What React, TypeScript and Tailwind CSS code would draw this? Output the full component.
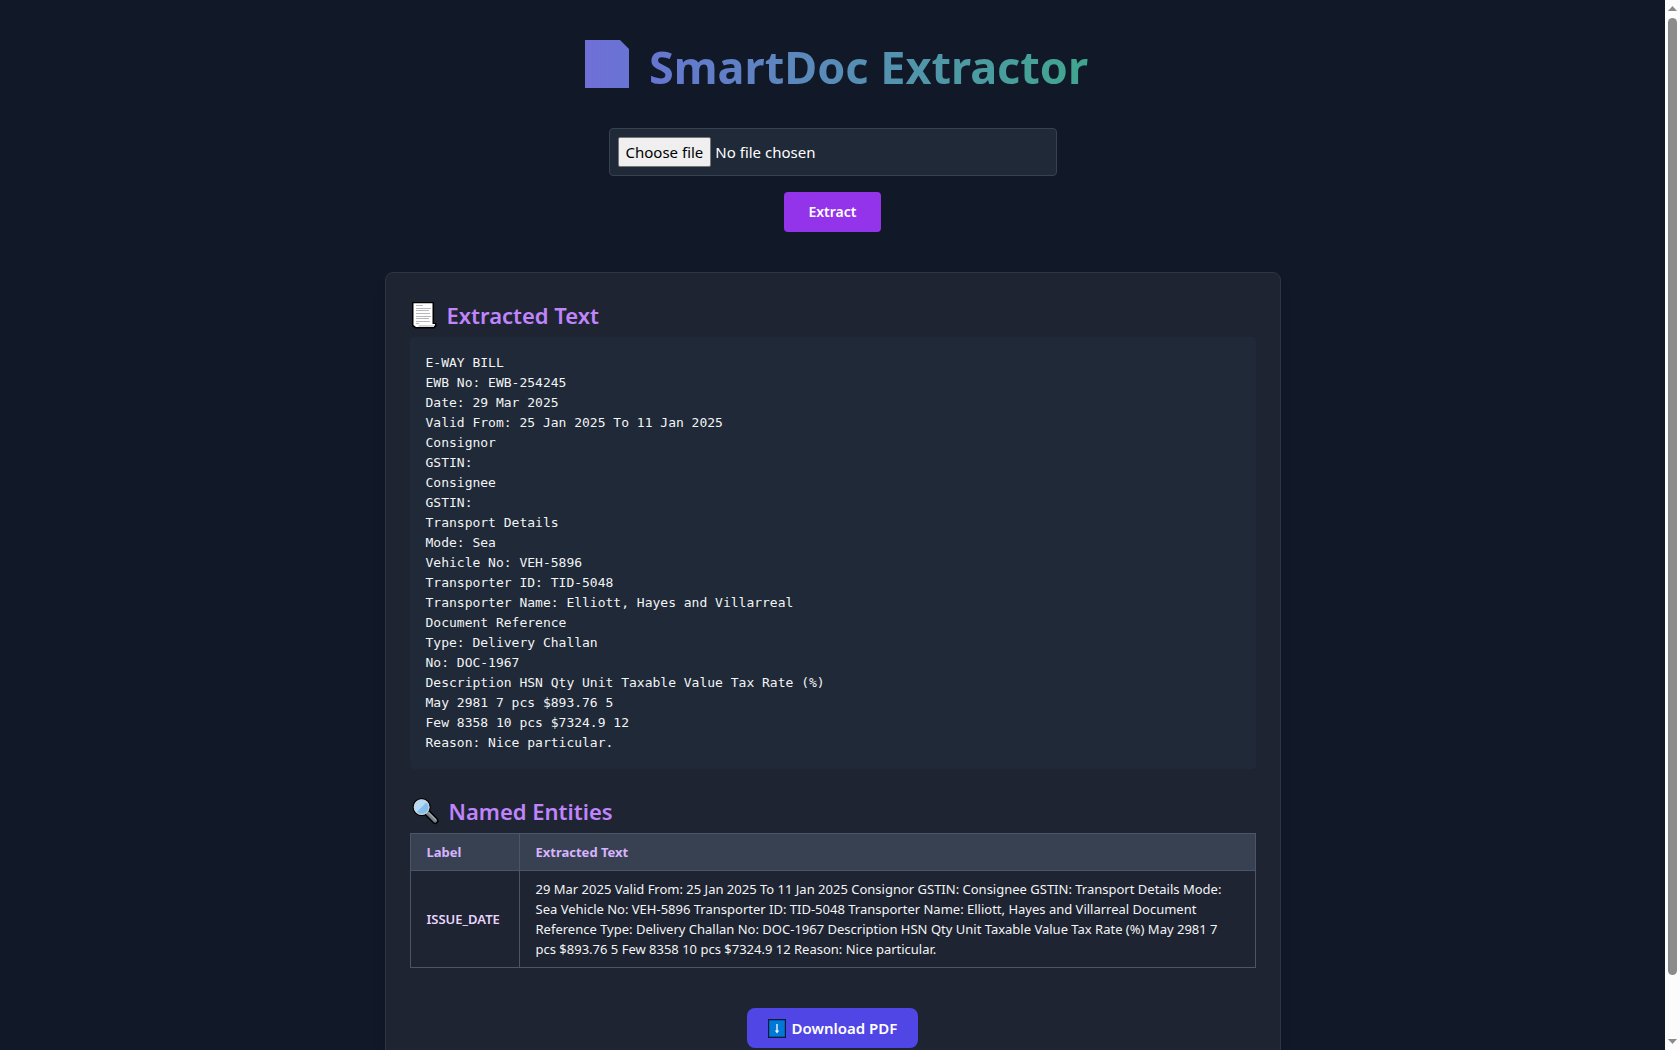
import React from "react";

const extractedText = `E-WAY BILL
EWB No: EWB-254245
Date: 29 Mar 2025
Valid From: 25 Jan 2025 To 11 Jan 2025
Consignor
GSTIN:
Consignee
GSTIN:
Transport Details
Mode: Sea
Vehicle No: VEH-5896
Transporter ID: TID-5048
Transporter Name: Elliott, Hayes and Villarreal
Document Reference
Type: Delivery Challan
No: DOC-1967
Description HSN Qty Unit Taxable Value Tax Rate (%)
May 2981 7 pcs $893.76 5
Few 8358 10 pcs $7324.9 12
Reason: Nice particular.`;

const entities = [
  {
    label: "ISSUE_DATE",
    text: "29 Mar 2025 Valid From: 25 Jan 2025 To 11 Jan 2025 Consignor GSTIN: Consignee GSTIN: Transport Details Mode: Sea Vehicle No: VEH-5896 Transporter ID: TID-5048 Transporter Name: Elliott, Hayes and Villarreal Document Reference Type: Delivery Challan No: DOC-1967 Description HSN Qty Unit Taxable Value Tax Rate (%) May 2981 7 pcs $893.76 5 Few 8358 10 pcs $7324.9 12 Reason: Nice particular.",
  },
];

function PageIcon() {
  return (
    <svg className="shrink-0" width="44" height="48" viewBox="0 0 44 48" aria-hidden="true">
      <defs>
        <linearGradient id="page" x1="0" x2="1" y1="0" y2="0">
          <stop offset="0" stopColor="#706fd8" />
          <stop offset="1" stopColor="#6874d3" />
        </linearGradient>
      </defs>
      <path d="M0 0H35L44 9V48H0Z" fill="url(#page)" />
    </svg>
  );
}

function ScrollIcon() {
  return (
    <svg width="25" height="27" viewBox="0 0 25 27" aria-hidden="true">
      <path d="M0 0H22V21H24.5V24L22.5 26.5H3.5L0 24Z" fill="#000" />
      <path d="M1.5 1.2H20.5V22H23.3L21.5 25H4L1.5 23Z" fill="#fff" />
      <path d="M7 23H23L21.5 25H6Z" fill="#d5d5d8" />
      <g stroke="#bab7bc" strokeWidth="1">
        <path d="M4 3.5H11M4 6.5H19M4 8.5H17M4 11.5H18M4 14.5H19M4 16.5H17M4 19.5H18M4 21.5H7" />
      </g>
    </svg>
  );
}

function MagnifierIcon() {
  return (
    <svg width="27" height="28" viewBox="0 0 28 28" aria-hidden="true">
      <path d="M15 15L24 24" stroke="#000" strokeWidth="7" strokeLinecap="round" />
      <circle cx="10" cy="10" r="9.4" fill="#000" />
      <path d="M16 16L24 24" stroke="#74848a" strokeWidth="4" strokeLinecap="round" />
      <path d="M17.5 16L24.5 23" stroke="#a3b0b5" strokeWidth="1.3" strokeLinecap="round" />
      <circle cx="10" cy="10" r="8" fill="#83beec" />
      <path d="M4.5 15.5A7.8 7.8 0 0 1 15.5 4.5Z" fill="#b5dbf5" />
      <circle cx="10" cy="10" r="7.6" fill="none" stroke="#c9d3d8" strokeWidth="1.3" />
    </svg>
  );
}

function DownIcon() {
  return (
    <svg width="18" height="19" viewBox="0 0 18 19" aria-hidden="true">
      <path d="M0 0H18V19H0Z" fill="#0c1a3c" />
      <path d="M1.2 1.3H16.8V17.7H1.2Z" fill="#0078d7" />
      <path d="M9 5V13" stroke="#fff" strokeWidth="1.3" />
      <path d="M6.9 11.6L9 14.4L11.1 11.6Z" fill="#fff" />
    </svg>
  );
}

function ScrollRail() {
  return (
    <div className="flex w-[15px] shrink-0 flex-col items-center bg-[#fcfcfc] py-1.5" aria-hidden="true">
      <svg width="9" height="5" viewBox="0 0 9 5"><path d="M0 5L4.5 0L9 5Z" fill="#8b8b8b" /></svg>
      <div className="mt-[7px] min-h-0 w-[9px] flex-[955] rounded-full bg-[#8b8b8b]" />
      <div className="flex-[64]" />
      <svg width="9" height="5" viewBox="0 0 9 5"><path d="M0 0H9L4.5 5Z" fill="#8b8b8b" /></svg>
    </div>
  );
}

const sectionTitle = "mb-1.5 flex items-center gap-2.5 pt-0.5 pl-0.5 text-[22px] leading-8 font-semibold text-[#c084fc]";

export default function App() {
  return (
    <div className="flex h-screen bg-[#111827] font-['Noto_Sans','Open_Sans',sans-serif] text-white">
      <main className="min-w-0 flex-1 overflow-y-auto px-6 py-10 [scrollbar-width:none]">
        <h1 className="mb-8 flex h-14 items-start justify-center gap-5 pl-2 text-[45px] leading-[54px] font-bold">
          <PageIcon />
          <span className="bg-linear-to-r from-[#6675d1] to-[#3fa68e] bg-clip-text text-transparent">SmartDoc Extractor</span>
        </h1>

        <form className="flex flex-col items-center gap-4" onSubmit={(e) => e.preventDefault()}>
          <label className="relative flex h-12 w-full max-w-md items-center gap-1 rounded-sm border border-[#374151] bg-[#1f2937] px-2">
            <span className="rounded-[2px] border border-[#767676] bg-[#efefef] px-[7px] text-[15px] leading-7 text-black">Choose file</span>
            <span className="text-[15px]">No file chosen</span>
            <input type="file" aria-label="Choose file" className="absolute inset-0 w-full cursor-pointer opacity-0" />
          </label>
          <button type="submit" className="h-10 rounded-sm bg-[#9333ea] px-6 text-sm font-semibold">Extract</button>
        </form>

        <div className="mx-auto mt-10 max-w-4xl rounded-lg border border-[#2f3542] bg-[#1e2431] p-6 shadow-lg">
          <section className="mb-6">
            <h2 className={sectionTitle}>
              <ScrollIcon />
              Extracted Text
            </h2>
            <pre className="rounded-sm bg-[#1f2937] p-4 font-['DejaVu_Sans_Mono',monospace] text-[13px] leading-5 whitespace-pre-wrap text-[#f3f4f6]">{extractedText}</pre>
          </section>

          <section>
            <h2 className={sectionTitle}>
              <MagnifierIcon />
              Named Entities
            </h2>
            <table className="w-full border-collapse text-left text-[13px] leading-5">
              <thead>
                <tr className="bg-[#374151] text-[#d8b4fe]">
                  <th scope="col" className="w-[109px] border border-[#4b5563] px-4 py-2 font-bold">Label</th>
                  <th scope="col" className="border border-[#4b5563] px-4 py-2 font-bold">Extracted Text</th>
                </tr>
              </thead>
              <tbody>
                {entities.map((entity) => (
                  <tr key={entity.label}>
                    <td className="border border-[#4b5563] px-4 py-2 font-semibold text-[#e9d5ff]">{entity.label}</td>
                    <td className="border border-[#4b5563] px-4 py-2 text-[#f3f4f6]">{entity.text}</td>
                  </tr>
                ))}
              </tbody>
            </table>
          </section>

          <div className="mt-10 flex justify-center">
            <button type="button" className="flex h-10 items-center gap-1.5 rounded-lg bg-[#4f46e5] px-[21px] text-[15px] font-semibold">
              <DownIcon />
              Download PDF
            </button>
          </div>
        </div>
      </main>
      <ScrollRail />
    </div>
  );
}
